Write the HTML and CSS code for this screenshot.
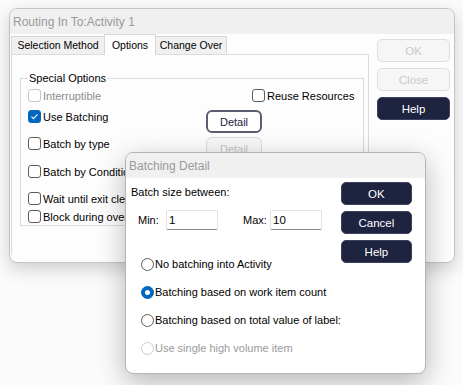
FILE: index.html
```html
<!DOCTYPE html>
<html lang="en">
<head>
<meta charset="UTF-8">
<title>Routing In To:Activity 1</title>
<link rel="stylesheet" href="styles.css">
</head>
<body>

<div class="desktop">

    <!-- Routing dialog -->
    <div class="window main-window">
        <div class="titlebar">Routing In To:Activity 1</div>
        <div class="main-body">
            <div class="tab-area">
                <div class="tabs">
                    <div class="tab tab-selection">Selection Method</div>
                    <div class="tab tab-options active">Options</div>
                    <div class="tab tab-change">Change Over</div>
                </div>
                <div class="tab-panel">
                    <fieldset class="group">
                        <legend>Special Options</legend>

                        <div class="opt-row row-1">
                            <label class="check disabled"><span class="box"></span>Interruptible</label>
                            <label class="check reuse"><span class="box"></span>Reuse Resources</label>
                        </div>
                        <div class="opt-row row-2">
                            <label class="check"><span class="box checked"><svg width="11" height="11" viewBox="0 0 11 11"><polyline points="2.5,5.6 4.5,7.6 8.5,3.4" fill="none" stroke="#fff" stroke-width="1.1"/></svg></span>Use Batching</label>
                            <button class="detail-btn">Detail</button>
                        </div>
                        <div class="opt-row row-3">
                            <label class="check"><span class="box"></span>Batch by type</label>
                            <button class="detail-btn off">Detail</button>
                        </div>
                        <div class="opt-row row-4">
                            <label class="check"><span class="box"></span>Batch by Condition</label>
                        </div>
                        <div class="opt-row row-5">
                            <label class="check"><span class="box"></span>Wait until exit clear</label>
                        </div>
                        <div class="opt-row row-6">
                            <label class="check"><span class="box"></span>Block during overtime</label>
                        </div>
                    </fieldset>
                </div>
            </div>
            <div class="side-buttons">
                <button class="btn off">OK</button>
                <button class="btn off">Close</button>
                <button class="btn">Help</button>
            </div>
        </div>
    </div>

    <!-- Batching Detail dialog -->
    <div class="window detail-window">
        <div class="titlebar">Batching Detail</div>
        <div class="detail-body">
            <div class="detail-main">
                <div class="size-title">Batch size between:</div>
                <div class="size-row">
                    <span class="size-label">Min:</span>
                    <input class="size-input" type="text" value="1">
                    <span class="size-label max">Max:</span>
                    <input class="size-input" type="text" value="10">
                </div>
                <div class="radio-list">
                    <label class="radio"><span class="dot"></span>No batching into Activity</label>
                    <label class="radio"><span class="dot on"></span>Batching based on work item count</label>
                    <label class="radio"><span class="dot"></span>Batching based on total value of label:</label>
                    <label class="radio disabled"><span class="dot"></span>Use single high volume item</label>
                </div>
            </div>
            <div class="side-buttons detail-buttons">
                <button class="btn">OK</button>
                <button class="btn">Cancel</button>
                <button class="btn">Help</button>
            </div>
        </div>
    </div>

</div>

</body>
</html>
```

FILE: styles.css
```css
body {
    margin: 0;
    background-color: #ffffff;
    font-family: 'Liberation Sans', Arial, sans-serif;
    font-size: 11px;
    color: #000000;
}

.desktop {
    position: relative;
    width: 463px;
    height: 385px;
    overflow: hidden;
    background-color: #fbfbfb;
}

/* Windows sit on the desktop at their own places */
.window {
    position: absolute;
    box-sizing: border-box;
    border: 1px solid #c4c4c4;
    border-radius: 8px;
    background-color: #fdfdfd;
    overflow: hidden;
}

.main-window {
    left: 9px;
    top: 8px;
    width: 446px;
    height: 255px;
    box-shadow: 0 6px 18px rgba(0, 0, 0, 0.18);
}

.detail-window {
    left: 125px;
    top: 152px;
    width: 301px;
    height: 222px;
    border-color: #b4b4b4;
    background-color: #ffffff;
    box-shadow: 0 8px 28px rgba(0, 0, 0, 0.28);
}

.titlebar {
    height: 25px;
    line-height: 26px;
    padding-left: 3px;
    background-color: #f0f0f0;
    color: #9a9a9a;
    font-size: 12px;
}

/* Main window */
.main-body {
    display: flex;
    padding: 0 4px 0 1px;
    gap: 8px;
}

.tab-area {
    width: 358px;
}

.tabs {
    display: flex;
    align-items: flex-end;
    height: 20px;
}

.tab {
    box-sizing: border-box;
    height: 18px;
    line-height: 17px;
    text-align: center;
    border: 1px solid #d9d9d9;
    border-bottom: none;
    background-color: #f0f0f0;
    white-space: nowrap;
    font-size: 10.5px;
}

.tab + .tab {
    margin-left: -1px;
}

.tab-selection { width: 94px; }
.tab-options { width: 52px; }
.tab-change { width: 72px; }

.tab.active {
    height: 21px;
    line-height: 20px;
    margin-bottom: -1px;
    background-color: #fdfdfd;
    z-index: 1;
}

.tab-panel {
    height: 200px;
    border: 1px solid #dcdcdc;
    border-bottom: none;
    background-color: #fdfdfd;
}

.group {
    box-sizing: border-box;
    width: 344px;
    height: 154px;
    margin: 17px 0 0 8px;
    padding: 4px 0 0 7px;
    border: 1px solid #dcdcdc;
}

.group legend {
    padding: 0 1px;
    margin-left: 0;
    line-height: 13px;
}

.opt-row {
    display: flex;
    align-items: flex-start;
}

.row-1 { height: 21px; }
.row-2 { height: 27px; }
.row-3 { height: 28px; }
.row-4 { height: 27px; }
.row-5 { height: 18px; }
.row-6 { height: 13px; }

.check {
    display: flex;
    align-items: center;
    gap: 2px;
    width: 178px;
    height: 13px;
    white-space: nowrap;
    flex-shrink: 0;
}

.check.reuse {
    width: auto;
    margin-left: 46px;
}

.box {
    box-sizing: border-box;
    width: 13px;
    height: 13px;
    border: 1px solid #5c5c5c;
    border-radius: 3px;
    background-color: #ffffff;
    display: flex;
    align-items: center;
    justify-content: center;
    flex-shrink: 0;
}

.box.checked {
    border-color: #0067c0;
    background-color: #0067c0;
}

.check.disabled {
    color: #8c8c8c;
}

.check.disabled .box {
    border-color: #c6c6c6;
}

.detail-btn {
    box-sizing: border-box;
    width: 56px;
    height: 23px;
    padding: 0;
    border: 2px solid #5b5e72;
    border-radius: 6px;
    background-color: #ffffff;
    color: #1e2340;
    font-family: inherit;
    font-size: 11px;
}

.detail-btn.off {
    border: 1px solid #dadada;
    background-color: #f8f8f8;
    color: #c6c6c6;
}

.side-buttons {
    display: flex;
    flex-direction: column;
    gap: 6px;
    padding-top: 5px;
}

.btn {
    box-sizing: border-box;
    width: 73px;
    height: 23px;
    padding: 0;
    border: 1px solid #3d4160;
    border-radius: 5px;
    background-color: #1e2340;
    color: #ffffff;
    font-family: inherit;
    font-size: 11.5px;
}

.btn.off {
    border-color: #dedede;
    background-color: #f6f6f6;
    color: #c9c9c9;
}

/* Batching Detail */
.detail-body {
    display: flex;
    padding: 4px 15px 0 5px;
}

.detail-main {
    flex: 1;
}

.size-title {
    margin-top: 3px;
    line-height: 14px;
}

.size-row {
    display: flex;
    align-items: center;
    margin-top: 11px;
    padding-left: 7px;
}

.size-label {
    width: 28px;
    flex-shrink: 0;
}

.size-label.max {
    margin-left: 25px;
    width: 27px;
}

.size-input {
    box-sizing: border-box;
    width: 52px;
    height: 20px;
    padding: 0 2px;
    border: 1px solid #e2e2e2;
    border-bottom: 1px solid #8a8a8a;
    border-radius: 2px;
    background-color: #ffffff;
    font-family: inherit;
    font-size: 11.5px;
    color: #000000;
    flex-shrink: 0;
}

.radio-list {
    margin-top: 20px;
    padding-left: 10px;
}

.radio {
    display: flex;
    align-items: center;
    gap: 1px;
    height: 28px;
    white-space: nowrap;
}

.dot {
    box-sizing: border-box;
    width: 13px;
    height: 13px;
    border: 1px solid #5c5c5c;
    border-radius: 50%;
    background-color: #ffffff;
    display: flex;
    align-items: center;
    justify-content: center;
    flex-shrink: 0;
}

.dot.on {
    border-color: #0067c0;
    background-color: #0067c0;
}

.dot.on::after {
    content: '';
    width: 5px;
    height: 5px;
    border-radius: 50%;
    background-color: #ffffff;
}

.radio.disabled {
    color: #9a9a9a;
}

.radio.disabled .dot {
    border-color: #cdcdcd;
}

.detail-buttons {
    padding-top: 0;
}

.detail-buttons .btn {
    width: 71px;
}
```
